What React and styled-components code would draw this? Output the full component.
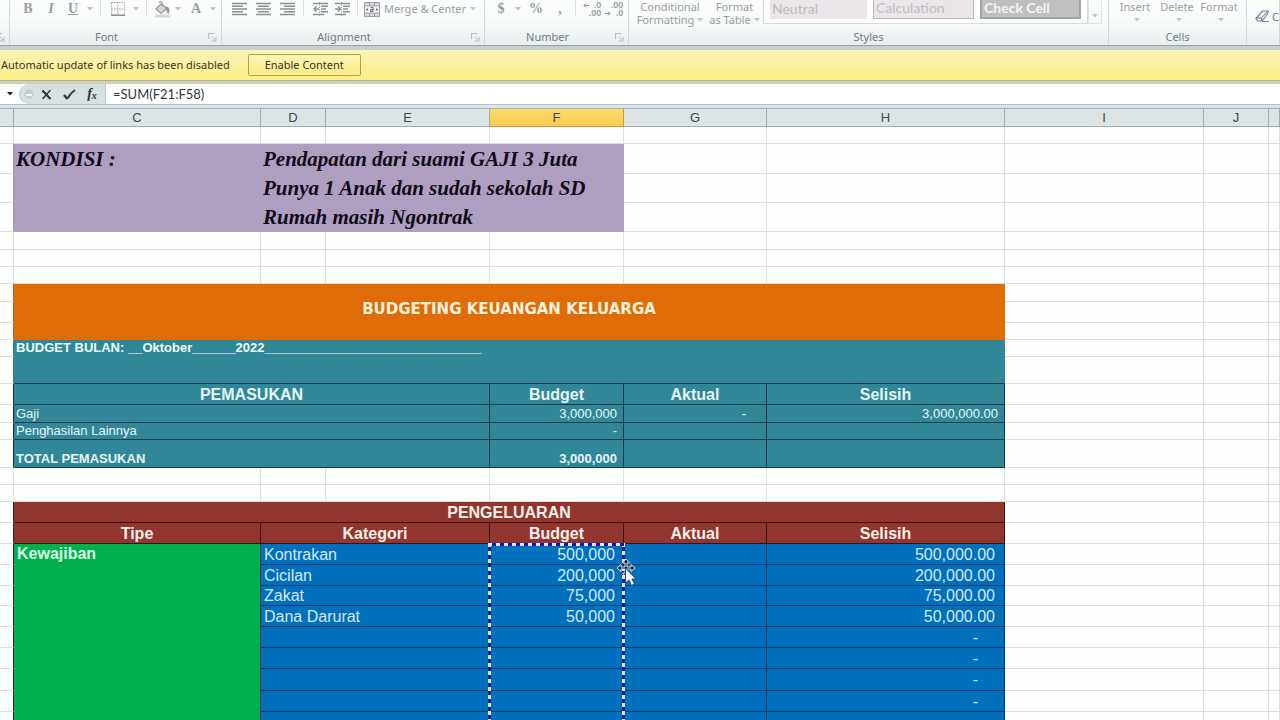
import React from 'react';
import styled, { createGlobalStyle, css } from 'styled-components';

const GlobalStyle = createGlobalStyle`
  * { box-sizing: border-box; }
  html, body { margin: 0; height: 100%; overflow: hidden; }
  body { font-family: "Liberation Sans", Arial, sans-serif; background: #fdfffd; }
  button, input { font: inherit; color: inherit; border: 0; padding: 0; margin: 0; background: none; }
`;

const uiFont = '"Noto Sans", "Open Sans", sans-serif';

const Window = styled.main`
  display: flex;
  flex-direction: column;
  height: 100vh;
  overflow: hidden;
`;

/* Ribbon */
const Ribbon = styled.header`
  flex: none;
  display: flex;
  height: 46px;
  overflow: hidden;
  background: linear-gradient(#fcfefc 0, #f8fbf9 20px, #e8edf0 45px);
  border-bottom: 1px solid #98a2a6;
  font-family: ${uiFont};
  font-size: 11px;
  color: #9a9e9c;
`;

const Group = styled.section`
  flex: ${(p) => (p.$width ? 'none' : '1')};
  width: ${(p) => (p.$width ? `${p.$width}px` : 'auto')};
  display: flex;
  flex-direction: column;
  overflow: hidden;
  border-right: 1px solid #d3d9da;
`;

const Tools = styled.div`
  flex: none;
  height: 28px;
  display: flex;
  align-items: flex-start;
  padding-left: ${(p) => p.$inset || 0}px;
`;

const Tool = styled.button`
  flex: none;
  width: ${(p) => p.$width}px;
  height: 18px;
  display: flex;
  align-items: center;
  justify-content: center;
  font-family: "Liberation Serif", serif;
  font-weight: ${(p) => (p.$light ? 400 : 700)};
  font-style: ${(p) => (p.$italic ? 'italic' : 'normal')};
  text-decoration: ${(p) => (p.$underline ? 'underline' : 'none')};
  font-size: 14px;
  line-height: 18px;
`;

const MergeButton = styled.button`
  display: flex;
  align-items: center;
  gap: 4px;
  height: 18px;
  padding-left: 4px;
  font-size: 11px;
  line-height: 18px;
  white-space: nowrap;
`;

const Divider = styled.span`
  flex: none;
  width: 1px;
  height: 16px;
  margin: 0 ${(p) => p.$gap || 5}px 0 4px;
  background: #dde2e1;
`;

const GroupFoot = styled.div`
  position: relative;
  display: flex;
  align-items: center;
  justify-content: center;
  height: 17px;
  padding-right: ${(p) => (p.$launcher ? 18 : 0)}px;
  line-height: 17px;
  color: #727a7c;
`;

const LauncherButton = styled.button`
  position: absolute;
  right: 4px;
  top: 5px;
  width: 9px;
  height: 9px;
  display: flex;
`;

const StackButton = styled.button`
  flex: none;
  width: ${(p) => p.$width}px;
  height: 28px;
  padding-bottom: 2px;
  font-size: 11px;
  line-height: 13px;
  white-space: nowrap;
  svg { margin-left: 3px; vertical-align: 2px; }
`;

const Gallery = styled.div`
  flex: none;
  display: flex;
  gap: 6px;
  height: 24px;
  width: 325px;
  padding-left: 6px;
  border: 1px solid #d5dadb;
  border-top: 0;
  background: #fdfefd;
`;

const StyleSwatch = styled.button`
  width: 101px;
  height: 19px;
  padding-left: 2px;
  text-align: left;
  font-family: Lato, sans-serif;
  font-size: 14px;
  line-height: 16px;
  padding-bottom: 2px;
  color: #bfbcbe;
  background: #e9e5e9;
  ${(p) => p.$kind === 'plain' && css`width: 97px;`}
  ${(p) => p.$kind === 'outlined' && css`border: 1px solid #b9b9b9; border-top: 0;`}
  ${(p) => p.$kind === 'checked' && css`
    color: #f4f4f4;
    background: #bebfbe;
    border: 2px solid #a2a4a3;
    border-top: 0;
    padding-bottom: 1px;
    font-weight: 700;
  `}
`;

const GalleryMore = styled.button`
  width: 14px;
  height: 24px;
  display: flex;
  align-items: flex-end;
  justify-content: center;
  padding-bottom: 5px;
  border: 1px solid #dfe3e3;
  border-top: 0;
`;

const ClearButton = styled.button`
  display: flex;
  gap: 3px;
  padding: 9px 0 0 8px;
  font-size: 11px;
  line-height: 16px;
  color: #777;
`;

/* Message bar */
const MessageBar = styled.section`
  flex: none;
  display: flex;
  align-items: center;
  gap: 18px;
  height: 38px;
  padding: 0 0 2px 1px;
  border-top: 4px solid #c9cfc9;
  border-bottom: 3px solid #cdd2c0;
  background: linear-gradient(#fbf5b8, #fdee85);
  box-shadow: inset 0 -1px #b9b47a;
  font-family: ${uiFont};
  font-size: 11px;
  color: #33352a;
  white-space: nowrap;
`;

const EnableButton = styled.button`
  width: 113px;
  height: 22px;
  border: 1px solid #b3a04c;
  border-radius: 2px;
  background: linear-gradient(#fdf5b4, #fbec86);
`;

/* Formula bar */
const FormulaBar = styled.section`
  flex: none;
  display: flex;
  height: 25px;
  border-bottom: 1px solid #a9b1b3;
  background: linear-gradient(#fefffe 20px, #b9c0c2 20px, #b9c0c2 21px, #dce5ea 21px);
`;

const NameBoxDrop = styled.button`
  width: 19px;
  height: 20px;
  display: flex;
  align-items: center;
  justify-content: center;
`;

const FormulaTools = styled.div`
  display: flex;
  align-items: center;
  justify-content: space-between;
  width: 87px;
  height: 20px;
  padding: 0 3px 0 4px;
  background: #d9e0e2;
  border: 1px solid #bcc4c6;
  border-width: 0 1px;
  border-radius: 10px 0 0 10px;
`;

const FormulaTool = styled.button`
  width: 20px;
  height: 20px;
  display: flex;
  align-items: center;
  justify-content: center;
  font: italic 700 14px/18px "Liberation Serif", serif;
  color: #2c3235;
  sub { font-size: 10px; line-height: 10px; vertical-align: -1px; }
`;

const FormulaInput = styled.input`
  flex: 1;
  height: 20px;
  padding-left: 7px;
  font-family: Lato, sans-serif;
  font-size: 13px;
  color: #33383a;
  outline: none;
`;

/* Worksheet */
const Sheet = styled.section`
  flex: 1;
  overflow: hidden;
`;

const Grid = styled.table`
  width: 100%;
  table-layout: fixed;
  border-collapse: separate;
  border-spacing: 0;
`;

const Col = styled.col`
  width: ${(p) => (p.$width ? `${p.$width}px` : 'auto')};
`;

const Row = styled.tr`
  height: ${(p) => p.$height}px;
`;

const ColumnLetter = styled.th`
  height: 18px;
  padding: 0;
  font-size: 13px;
  line-height: 16px;
  font-weight: 400;
  color: #40464a;
  background: ${(p) => (p.$active ? 'linear-gradient(#fbdc68, #fbcb52)' : '#dde4e5')};
  border-right: 1px solid ${(p) => (p.$active ? '#c79a35' : '#a4abae')};
  border-bottom: 1px solid ${(p) => (p.$active ? '#c79a35' : '#a4abae')};
`;

const tones = {
  blank: css`background: #fdfffd; border-color: #dde0dd;`,
  purple: css`background: #ae9fc2; border-color: #ae9fc2; color: #0e0a14;`,
  orange: css`background: #df6c06; border-color: #df6c06; color: #fff3df;`,
  tealPlain: css`background: #318797; border-color: #318797; color: #f0fbfc;`,
  teal: css`background: #318797; border-color: #123c48; color: #e6f6f7;`,
  red: css`background: #90362e; border-color: #3f1110; color: #fdf1ec;`,
  green: css`background: #00b04e; border-color: #12402a; color: #dcf8e4;`,
  blue: css`background: #0070bd; border-color: #053a6c; color: #d3e9f7;`,
};

const cellStyle = css`
  position: relative;
  padding: 0 ${(p) => p.$end || 2}px 0 ${(p) => p.$start || 2}px;
  border-style: solid;
  border-width: 0 1px 1px 0;
  font-size: ${(p) => p.$size || 16}px;
  line-height: ${(p) => (p.$size === 13 ? 16 : 19)}px;
  font-weight: ${(p) => (p.$bold ? 700 : 400)};
  text-align: ${(p) => p.$align || 'left'};
  vertical-align: ${(p) => p.$valign || 'middle'};
  white-space: nowrap;
  ${(p) => tones[p.$tone || 'blank']}
  ${(p) => p.$edge && css`border-right-color: ${p.$edge};`}
  ${(p) => p.$under && css`border-bottom-color: ${p.$under};`}
`;

const Cell = styled.td`${cellStyle}`;
const HeadCell = styled.th`${cellStyle}`;

const ScriptCell = styled(Cell)`
  font-family: "Brush Script MT", "Liberation Serif", serif;
  font-style: italic;
  font-weight: 700;
  font-size: 21px;
  line-height: 26px;
`;

const TitleCell = styled(HeadCell)`
  font-family: "Comic Sans MS", "DejaVu Sans", sans-serif;
  font-size: 15px;
  padding-bottom: 4px;
`;

const Ants = styled.div`
  position: absolute;
  z-index: 1;
  left: -2px;
  right: -2px;
  top: -1px;
  height: 100vh;
  pointer-events: none;
  --dash: #dfe8fa 0 4px, #1618b4 4px 8px;
  background:
    repeating-linear-gradient(90deg, var(--dash)) top / 100% 3px no-repeat,
    repeating-linear-gradient(180deg, var(--dash)) left / 3px 100% no-repeat,
    repeating-linear-gradient(180deg, var(--dash)) right / 3px 100% no-repeat;
`;

const Pointer = styled.svg`
  position: absolute;
  right: -13px;
  top: 15px;
`;

function Caret({ dark }) {
  return (
    <svg width="6" height="4" viewBox="0 0 6 4" aria-hidden="true">
      <path d="M0 0h6L3 3.5z" fill={dark ? '#222' : '#c2c6c4'} />
    </svg>
  );
}

function Launcher({ label }) {
  return (
    <LauncherButton aria-label={label}>
      <svg width="9" height="9" viewBox="0 0 9 9" fill="none" stroke="#b9bfc0">
        <path d="M.5 6V.5H6M4 4l3 3M8 4v4H4" />
      </svg>
    </LauncherButton>
  );
}

function AlignIcon({ kind }) {
  const start = { left: 0, center: 2, right: 4 }[kind];
  return (
    <svg width="15" height="14" viewBox="0 0 15 14" stroke="#8d9190" strokeWidth="1.4">
      <path d={`M0 1.5h15M${start} 4.2h11M0 7h15M${start} 9.8h11M0 12.5h15`} />
    </svg>
  );
}

function IndentIcon({ flip }) {
  return (
    <svg width="15" height="14" viewBox="0 0 15 14" stroke="#8d9190" strokeWidth="1.4" fill="none">
      <path d="M0 1.5h15M8 4.2h7M8 7h5M8 9.8h7M0 12.5h11" />
      <path d={flip ? 'M0 7h5M3 4.5L5.5 7 3 9.5' : 'M1 7h5M3.5 4.5L1 7l2.5 2.5'} />
      <path d="M6.5 0v14" strokeDasharray="1 1.5" strokeWidth="1" />
    </svg>
  );
}

function BorderIcon() {
  return (
    <svg width="14" height="14" viewBox="0 0 14 14" fill="none" stroke="#a6aaa8">
      <path d="M.5.5h13v13M.5.5v13M7 .5v13M.5 7h13" strokeDasharray="1.5 1" />
      <path d="M0 13.2h14" stroke="#878b89" strokeWidth="1.5" />
    </svg>
  );
}

function FillIcon() {
  return (
    <svg width="17" height="17" viewBox="0 0 17 17" fill="none" stroke="#969a98" strokeWidth="1.2">
      <path d="M2 8l5.500-5.500 5 5L7 12.500z" fill="#d4d7d6" />
      <path d="M5 1.500c2-2 3.500 0 3.500 4" />
      <path d="M12 6c3 .5 3.500 3 2.500 6-1-.5-2-2-2.500-6z" fill="#969a98" />
      <path d="M1 15h15" stroke="#dbd6d2" strokeWidth="3" />
    </svg>
  );
}

function MergeIcon() {
  return (
    <svg width="16" height="15" viewBox="0 0 16 15" fill="none" stroke="#9c9fa3">
      <path d="M.5.5h15v14H.5z" fill="#d9d8de" />
      <path d="M.5 4h15M.5 11h15M5.500.5V4M10.500.5V4M5.500 11v3.500M10.500 11v3.500" />
      <path d="M1 4.500h14v6H1z" fill="#efeff2" stroke="none" />
      <path d="M2 7.500h2M12 7.500h2" stroke="#666a70" strokeWidth="1.500" />
      <path d="M6.500 5.500h2.500v4H6.500v-2H9" stroke="#666a70" />
    </svg>
  );
}

const DecimalText = styled.span`
  display: grid;
  grid-template-columns: 6px auto;
  font: 700 9px/8px "Liberation Sans", sans-serif;
  text-align: right;
  span { grid-column: 2; }
  svg { grid-row: ${(p) => (p.$increase ? 1 : 2)}; grid-column: 1; margin-top: 2px; }
`;

function DecimalIcon({ increase }) {
  return (
    <DecimalText $increase={increase}>
      <span>{increase ? '.0' : '.00'}</span>
      <span>{increase ? '.00' : '.0'}</span>
      <svg width="6" height="5" viewBox="0 0 6 5" fill="none" stroke="#8d9190">
        <path d={increase ? 'M6 2.500H1M3 .5l-2 2 2 2' : 'M0 2.500h5M3 .5l2 2-2 2'} />
      </svg>
    </DecimalText>
  );
}

function Eraser() {
  return (
    <svg width="14" height="14" viewBox="0 0 14 14" fill="none">
      <path d="M1 9.500L7.500 2 13 2 12.500 5 7 12H2.500z" fill="#f2f5fa" stroke="#77849b" strokeWidth="1.200" />
      <path d="M1.500 9h5L12.500 2.500M6.500 9l.5 3" stroke="#64738c" />
      <path d="M7 12.500h7" stroke="#7e8794" />
    </svg>
  );
}

const letters = ['', 'C', 'D', 'E', 'F', 'G', 'H', 'I', 'J', ''];
const widths = [14, 247, 65, 164, 134, 143, 238, 199, 65, null];

function Blanks({ count }) {
  return Array.from({ length: count }, (_, i) => <Cell key={i} />);
}

function BlankRow({ height }) {
  return <Row $height={height}><Blanks count={10} /></Row>;
}

const kondisi = [
  ['KONDISI :', 'Pendapatan dari suami GAJI 3 Juta', 30],
  ['', 'Punya 1 Anak dan sudah sekolah SD', 29],
  ['', 'Rumah masih Ngontrak', 29],
];

const pemasukan = [
  { label: 'Gaji', budget: '3,000,000', aktual: '-', selisih: '3,000,000.00', height: 18 },
  { label: 'Penghasilan Lainnya', budget: '-', height: 17 },
  { label: 'TOTAL PEMASUKAN', budget: '3,000,000', height: 28, bold: true },
];

const pengeluaran = [
  ['Kontrakan', '500,000', '500,000.00', 21],
  ['Cicilan', '200,000', '200,000.00', 21],
  ['Zakat', '75,000', '75,000.00', 20],
  ['Dana Darurat', '50,000', '50,000.00', 21],
  ['', '', '-', 21],
  ['', '', '-', 21],
  ['', '', '-', 22],
  ['', '', '-', 21],
  ['', '', '', 21],
];

function RibbonArea() {
  return (
    <Ribbon>
      <Group $width={10}>
        <Tools />
        <GroupFoot><Launcher label="Clipboard options" /></GroupFoot>
      </Group>
      <Group $width={212}>
        <Tools $inset={6}>
          <Tool $width={24}>B</Tool>
          <Tool $width={22} $italic>I</Tool>
          <Tool $width={22} $underline>U</Tool>
          <Tool $width={12} aria-label="Underline styles"><Caret /></Tool>
          <Divider />
          <Tool $width={24} aria-label="Borders"><BorderIcon /></Tool>
          <Tool $width={12} aria-label="Border styles"><Caret /></Tool>
          <Divider />
          <Tool $width={20} aria-label="Fill colour"><FillIcon /></Tool>
          <Tool $width={12} aria-label="Fill colours"><Caret /></Tool>
          <Tool $width={24}>A</Tool>
          <Tool $width={10} aria-label="Font colours"><Caret /></Tool>
        </Tools>
        <GroupFoot $launcher>Font<Launcher label="Font options" /></GroupFoot>
      </Group>
      <Group $width={263}>
        <Tools $inset={5}>
          <Tool $width={24} aria-label="Align left"><AlignIcon kind="left" /></Tool>
          <Tool $width={24} aria-label="Align centre"><AlignIcon kind="center" /></Tool>
          <Tool $width={24} aria-label="Align right"><AlignIcon kind="right" /></Tool>
          <Divider />
          <Tool $width={22} aria-label="Decrease indent"><IndentIcon /></Tool>
          <Tool $width={22} aria-label="Increase indent"><IndentIcon flip /></Tool>
          <Divider $gap={2} />
          <MergeButton><MergeIcon />Merge &amp; Center<Caret /></MergeButton>
        </Tools>
        <GroupFoot $launcher>Alignment<Launcher label="Alignment options" /></GroupFoot>
      </Group>
      <Group $width={144}>
        <Tools $inset={4}>
          <Tool $width={24}>$</Tool>
          <Tool $width={10} aria-label="Currencies"><Caret /></Tool>
          <Tool $width={26}>%</Tool>
          <Tool $width={22}>,</Tool>
          <Divider />
          <Tool $width={22} aria-label="Increase decimal"><DecimalIcon increase /></Tool>
          <Tool $width={22} aria-label="Decrease decimal"><DecimalIcon /></Tool>
        </Tools>
        <GroupFoot $launcher>Number<Launcher label="Number options" /></GroupFoot>
      </Group>
      <Group $width={480}>
        <Tools $inset={5}>
          <StackButton $width={72}>Conditional<br />Formatting<Caret /></StackButton>
          <StackButton $width={57}>Format<br />as Table<Caret /></StackButton>
          <Gallery>
            <StyleSwatch $kind="plain">Neutral</StyleSwatch>
            <StyleSwatch $kind="outlined">Calculation</StyleSwatch>
            <StyleSwatch $kind="checked">Check Cell</StyleSwatch>
          </Gallery>
          <GalleryMore aria-label="More styles"><Caret /></GalleryMore>
        </Tools>
        <GroupFoot>Styles</GroupFoot>
      </Group>
      <Group $width={138}>
        <Tools $inset={5}>
          <StackButton $width={42}>Insert<br /><Caret /></StackButton>
          <StackButton $width={42}>Delete<br /><Caret /></StackButton>
          <StackButton $width={42}>Format<br /><Caret /></StackButton>
        </Tools>
        <GroupFoot>Cells</GroupFoot>
      </Group>
      <Group>
        <Tools><ClearButton aria-label="Clear"><Eraser />C</ClearButton></Tools>
      </Group>
    </Ribbon>
  );
}

function FormulaArea() {
  return (
    <FormulaBar>
      <NameBoxDrop aria-label="Name box"><Caret dark /></NameBoxDrop>
      <FormulaTools>
        <svg width="10" height="10" viewBox="0 0 10 10" aria-hidden="true">
          <circle cx="5" cy="5" r="4.500" fill="#c4ccd0" />
          <path d="M2 6h6" stroke="#f4f7f8" strokeWidth="2" />
        </svg>
        <FormulaTool aria-label="Cancel">
          <svg width="11" height="11" viewBox="0 0 11 11" fill="none" stroke="#333b3f">
            <path d="M1.500 1.500l8 8.500" strokeWidth="2.200" />
            <path d="M9.500 1L1.500 10" strokeWidth="1.500" />
          </svg>
        </FormulaTool>
        <FormulaTool aria-label="Enter">
          <svg width="13" height="11" viewBox="0 0 13 11" fill="none" stroke="#333b3f">
            <path d="M1 6l3.500 4" strokeWidth="2.500" />
            <path d="M4.500 9.500Q7.500 4 12 1" strokeWidth="2" />
          </svg>
        </FormulaTool>
        <FormulaTool aria-label="Insert function"><span>f<sub>x</sub></span></FormulaTool>
      </FormulaTools>
      <FormulaInput aria-label="Formula" defaultValue="=SUM(F21:F58)" />
    </FormulaBar>
  );
}

function Worksheet() {
  const dark = '#1d2b2c';
  return (
    <Sheet>
      <Grid>
        <colgroup>{widths.map((w, i) => <Col key={i} $width={w} />)}</colgroup>
        <thead>
          <tr>
            {letters.map((l, i) => <ColumnLetter key={i} scope="col" $active={l === 'F'}>{l}</ColumnLetter>)}
          </tr>
        </thead>
        <tbody>
          <BlankRow height={17} />
          {kondisi.map(([label, text, height]) => (
            <Row key={text} $height={height}>
              <Cell $edge="#9c92ab" />
              <ScriptCell $tone="purple">{label}</ScriptCell>
              <ScriptCell $tone="purple" colSpan={3}>{text}</ScriptCell>
              <Blanks count={5} />
            </Row>
          ))}
          <BlankRow height={18} />
          <BlankRow height={17} />
          <BlankRow height={17} />

          <Row $height={18}>
            <Cell $edge="#a9662e" />
            <TitleCell $tone="orange" $bold $align="center" colSpan={6} rowSpan={3}>BUDGETING KEUANGAN KELUARGA</TitleCell>
            <Blanks count={3} />
          </Row>
          <Row $height={21}><Cell $edge="#a9662e" /><Blanks count={3} /></Row>
          <Row $height={17}><Cell $edge="#a9662e" /><Blanks count={3} /></Row>

          <Row $height={17}>
            <Cell $edge="#3e7883" />
            <Cell $tone="tealPlain" $bold $size={13} $valign="top" $under="#123c48" colSpan={6} rowSpan={2}>
              BUDGET BULAN: __Oktober______2022______________________________
            </Cell>
            <Blanks count={3} />
          </Row>
          <Row $height={27}><Cell $edge="#3e7883" /><Blanks count={3} /></Row>
          <Row $height={21}>
            <Cell $edge={dark} />
            <HeadCell $tone="teal" $bold $align="center" colSpan={3}>PEMASUKAN</HeadCell>
            <HeadCell $tone="teal" $bold $align="center">Budget</HeadCell>
            <HeadCell $tone="teal" $bold $align="center">Aktual</HeadCell>
            <HeadCell $tone="teal" $bold $align="center">Selisih</HeadCell>
            <Blanks count={3} />
          </Row>
          {pemasukan.map((r) => (
            <Row key={r.label} $height={r.height}>
              <Cell $edge={dark} />
              <Cell $tone="teal" $size={13} $bold={r.bold} $valign="bottom" colSpan={3}>{r.label}</Cell>
              <Cell $tone="teal" $size={13} $bold={r.bold} $valign="bottom" $align="right" $end={6}>{r.budget}</Cell>
              <Cell $tone="teal" $size={13} $valign="bottom" $align="right" $end={20}>{r.aktual}</Cell>
              <Cell $tone="teal" $size={13} $valign="bottom" $align="right" $end={6}>{r.selisih}</Cell>
              <Blanks count={3} />
            </Row>
          ))}
          <BlankRow height={17} />
          <BlankRow height={17} />

          <Row $height={21}>
            <Cell $edge={dark} />
            <HeadCell $tone="red" $bold $align="center" colSpan={6}>PENGELUARAN</HeadCell>
            <Blanks count={3} />
          </Row>
          <Row $height={21}>
            <Cell $edge={dark} />
            <HeadCell $tone="red" $bold $align="center">Tipe</HeadCell>
            <HeadCell $tone="red" $bold $align="center" colSpan={2}>Kategori</HeadCell>
            <HeadCell $tone="red" $bold $align="center">Budget</HeadCell>
            <HeadCell $tone="red" $bold $align="center">Aktual</HeadCell>
            <HeadCell $tone="red" $bold $align="center">Selisih</HeadCell>
            <Blanks count={3} />
          </Row>
          {pengeluaran.map(([name, budget, selisih, height], i) => (
            <Row key={i} $height={height}>
              <Cell $edge={dark} />
              {i === 0 && <Cell $tone="green" $bold $start={3} $valign="top" rowSpan={pengeluaran.length}>Kewajiban</Cell>}
              <Cell $tone="blue" $start={3} colSpan={2}>{name}</Cell>
              <Cell $tone="blue" $align="right" $end={8}>
                {budget}
                {i === 0 && (
                  <Ants>
                    <Pointer width="24" height="30" viewBox="0 0 24 30">
                      <path d="M12 1l3.500 4H13v4h4V6.500l4 3.500-4 3.500V11h-4v4h2.500L12 19l-3.500-4H11v-4H7v2.500L3 10l4-3.500V9h4V5H8.500z" fill="#15202d" stroke="#dfe8f4" strokeWidth="1" />
                      <path d="M11.500 10v15l3.500-3 2.500 5.500 3-1.500-2.500-5H22z" fill="#f7faff" stroke="#1d4f86" strokeWidth="1" />
                    </Pointer>
                  </Ants>
                )}
              </Cell>
              <Cell $tone="blue" />
              <Cell $tone="blue" $align="right" $end={selisih === '-' ? 26 : 9}>{selisih}</Cell>
              <Blanks count={3} />
            </Row>
          ))}
        </tbody>
      </Grid>
    </Sheet>
  );
}

export default function App() {
  return (
    <Window>
      <GlobalStyle />
      <RibbonArea />
      <MessageBar>
        <span>Automatic update of links has been disabled</span>
        <EnableButton>Enable Content</EnableButton>
      </MessageBar>
      <FormulaArea />
      <Worksheet />
    </Window>
  );
}
